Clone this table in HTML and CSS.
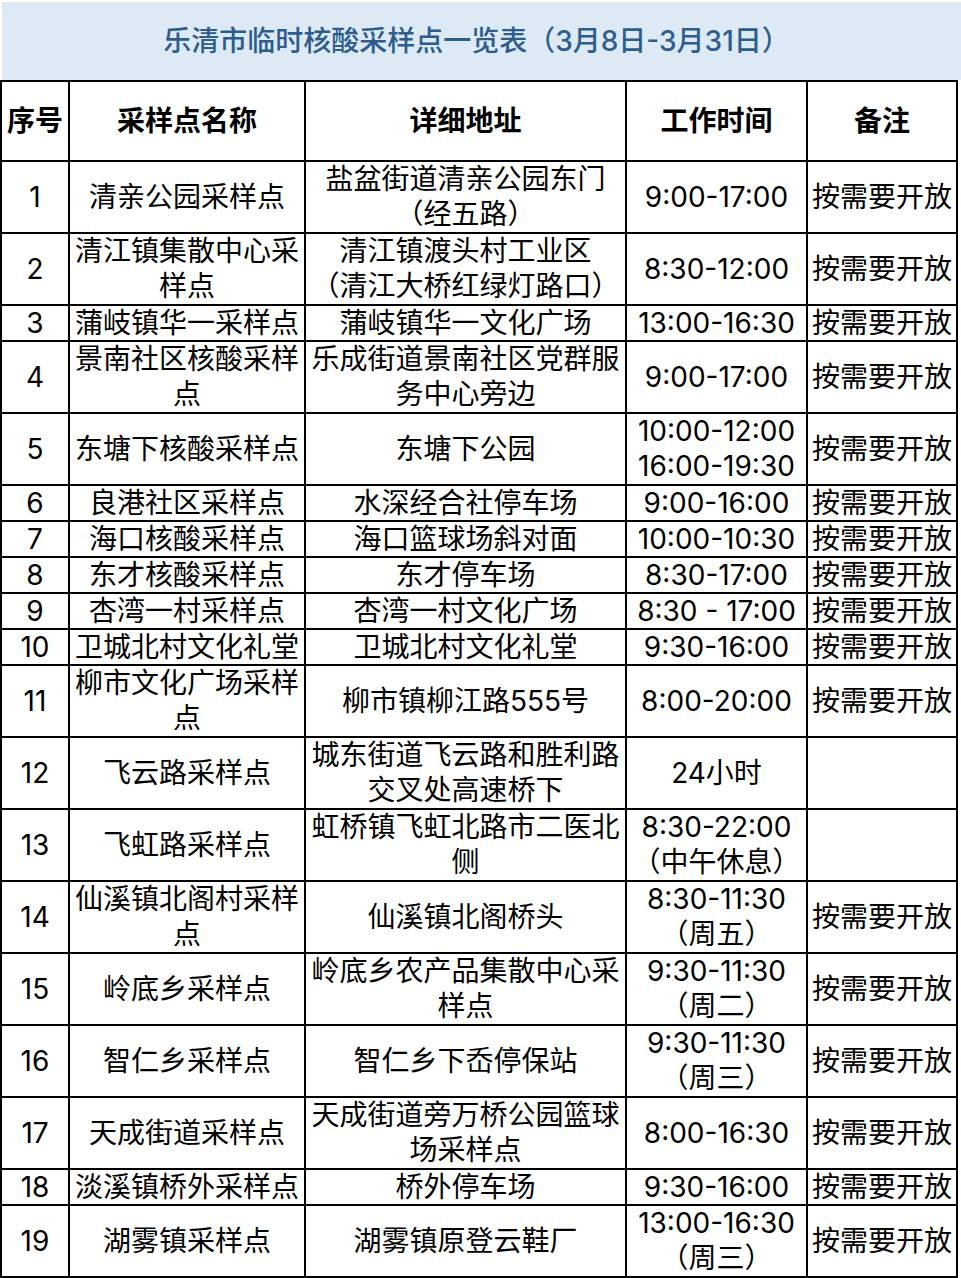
FILE: index.html
```html
<!DOCTYPE html>
<html lang="zh-CN">
<head>
<meta charset="utf-8">
<title>乐清市临时核酸采样点一览表</title>
<link rel="stylesheet" href="styles.css">
</head>
<body>
<div class="title">乐清市临时核酸采样点一览表（3月8日-3月31日）</div>
<table class="sheet">
  <colgroup>
    <col class="c-no"><col class="c-name"><col class="c-addr"><col class="c-time"><col class="c-note">
  </colgroup>
  <thead>
    <tr class="head"><th>序号</th><th>采样点名称</th><th>详细地址</th><th>工作时间</th><th>备注</th></tr>
  </thead>
  <tbody>
    <tr class="d"><td>1</td><td>清亲公园采样点</td><td>盐盆街道清亲公园东门<br>（经五路）</td><td>9:00-17:00</td><td>按需要开放</td></tr>
    <tr class="d"><td>2</td><td>清江镇集散中心采<br>样点</td><td>清江镇渡头村工业区<br>（清江大桥红绿灯路口）</td><td>8:30-12:00</td><td>按需要开放</td></tr>
    <tr class="s"><td>3</td><td>蒲岐镇华一采样点</td><td>蒲岐镇华一文化广场</td><td>13:00-16:30</td><td>按需要开放</td></tr>
    <tr class="d"><td>4</td><td>景南社区核酸采样<br>点</td><td>乐成街道景南社区党群服<br>务中心旁边</td><td>9:00-17:00</td><td>按需要开放</td></tr>
    <tr class="d"><td>5</td><td>东塘下核酸采样点</td><td>东塘下公园</td><td>10:00-12:00<br>16:00-19:30</td><td>按需要开放</td></tr>
    <tr class="s"><td>6</td><td>良港社区采样点</td><td>水深经合社停车场</td><td>9:00-16:00</td><td>按需要开放</td></tr>
    <tr class="s"><td>7</td><td>海口核酸采样点</td><td>海口篮球场斜对面</td><td>10:00-10:30</td><td>按需要开放</td></tr>
    <tr class="s"><td>8</td><td>东才核酸采样点</td><td>东才停车场</td><td>8:30-17:00</td><td>按需要开放</td></tr>
    <tr class="s"><td>9</td><td>杏湾一村采样点</td><td>杏湾一村文化广场</td><td>8:30 - 17:00</td><td>按需要开放</td></tr>
    <tr class="s"><td>10</td><td>卫城北村文化礼堂</td><td>卫城北村文化礼堂</td><td>9:30-16:00</td><td>按需要开放</td></tr>
    <tr class="d"><td>11</td><td>柳市文化广场采样<br>点</td><td>柳市镇柳江路555号</td><td>8:00-20:00</td><td>按需要开放</td></tr>
    <tr class="d"><td>12</td><td>飞云路采样点</td><td>城东街道飞云路和胜利路<br>交叉处高速桥下</td><td>24小时</td><td></td></tr>
    <tr class="d"><td>13</td><td>飞虹路采样点</td><td>虹桥镇飞虹北路市二医北<br>侧</td><td>8:30-22:00<br>（中午休息）</td><td></td></tr>
    <tr class="d"><td>14</td><td>仙溪镇北阁村采样<br>点</td><td>仙溪镇北阁桥头</td><td>8:30-11:30<br>（周五）</td><td>按需要开放</td></tr>
    <tr class="d"><td>15</td><td>岭底乡采样点</td><td>岭底乡农产品集散中心采<br>样点</td><td>9:30-11:30<br>（周二）</td><td>按需要开放</td></tr>
    <tr class="d"><td>16</td><td>智仁乡采样点</td><td>智仁乡下岙停保站</td><td>9:30-11:30<br>（周三）</td><td>按需要开放</td></tr>
    <tr class="d"><td>17</td><td>天成街道采样点</td><td>天成街道旁万桥公园篮球<br>场采样点</td><td>8:00-16:30</td><td>按需要开放</td></tr>
    <tr class="s"><td>18</td><td>淡溪镇桥外采样点</td><td>桥外停车场</td><td>9:30-16:00</td><td>按需要开放</td></tr>
    <tr class="d"><td>19</td><td>湖雾镇采样点</td><td>湖雾镇原登云鞋厂</td><td>13:00-16:30<br>（周三）</td><td>按需要开放</td></tr>
  </tbody>
</table>
</body>
</html>
```

FILE: styles.css
```css
html, body {
  margin: 0;
  padding: 0;
  background: #ffffff;
}

body {
  font-family: "Inter", "Noto Sans CJK SC", sans-serif;
  color: #000;
}

.title {
  margin: 2px 0 0 2px;
  height: 78px;
  line-height: 78px;
  background: #dde9f5;
  color: #2c5d8d;
  font-size: 28px;
  font-weight: 500;
  text-align: center;
  padding-right: 10px;
  box-sizing: border-box;
}

.sheet {
  width: 956px;
  border-collapse: collapse;
  table-layout: fixed;
}

.c-no { width: 68px; }
.c-name { width: 236px; }
.c-addr { width: 321px; }
.c-time { width: 181px; }
.c-note { width: 150px; }

.sheet th,
.sheet td {
  border: 2px solid #000;
  padding: 0;
  text-align: center;
  vertical-align: middle;
  font-size: 28px;
  white-space: nowrap;
  overflow: hidden;
}

.sheet th {
  height: 78px;
  font-weight: 700;
  line-height: 34px;
}

.sheet tr.s td {
  height: 34px;
  line-height: 34px;
}

.sheet tr.d td {
  height: 70px;
  line-height: 35px;
}
```
